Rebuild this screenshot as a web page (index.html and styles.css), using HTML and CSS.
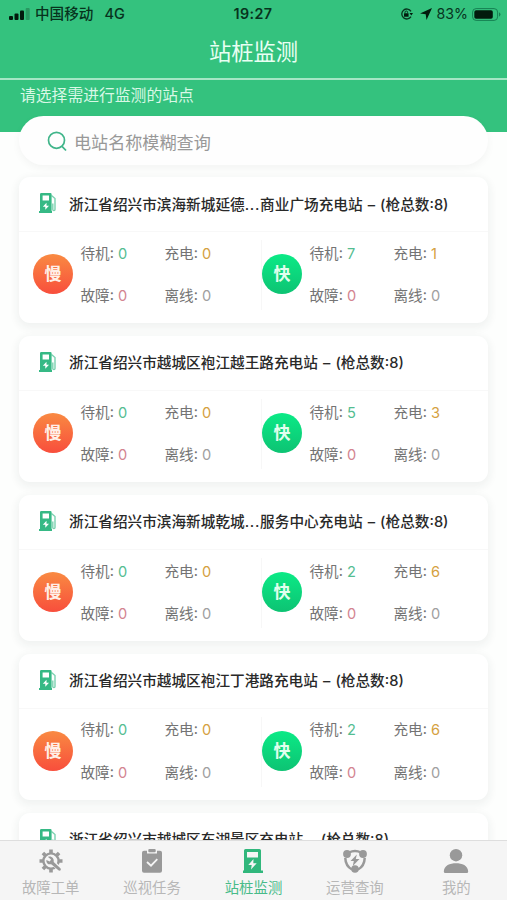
FILE: index.html
```html
<!DOCTYPE html>
<html lang="zh-CN">
<head>
<meta charset="utf-8">
<title>站桩监测</title>
<link rel="stylesheet" href="styles.css">
</head>
<body>
<svg class="defs" width="0" height="0">
  <symbol id="pump" viewBox="0 0 18 20">
    <path fill-rule="evenodd" d="M2.300 0h9a1.300 1.300 0 0 1 1.300 1.300V18H13v2H0v-2h1V1.300A1.300 1.300 0 0 1 2.300 0zM3.600 2.400v5.200h6.400v-5.200zM7.500 9.800l-3.700 4h2.500v3l3.700-4H7.500z"/>
    <path d="M12.500 2.500l3.500 3v11a1.100 1.100 0 0 1-2.200 0v-6" fill="none" stroke="currentColor" stroke-width="1.400" opacity=".65"/>
  </symbol>
</svg>
<div class="app">
  <header class="header">
    <div class="status">
      <div class="status-left">
        <svg width="21" height="12" viewBox="0 0 21 12"><rect x="0" y="8" width="4" height="4" rx="1"/><rect x="5.500" y="5.500" width="4" height="6.500" rx="1"/><rect x="11" y="2.500" width="4" height="9.500" rx="1"/><rect x="16.700" y="0" width="4" height="12" rx="1" opacity=".25"/></svg>
        <span class="carrier">中国移动</span><span class="network">4G</span>
      </div>
      <div class="time">19:27</div>
      <div class="status-right">
        <svg width="13" height="12" viewBox="0 0 13 12"><path d="M11 3.300A5 5 0 1 0 11 8.700" fill="none" stroke="#07331d" stroke-width="1.300"/><path d="M9.500 5h3.500l-1.700 2.500z"/><rect x="4" y="5.300" width="4.600" height="3.500" rx=".5"/><path d="M5 5.500V4.300a1.300 1.300 0 0 1 2.600 0v1.200" fill="none" stroke="#07331d"/></svg>
        <svg class="arrow" width="12" height="12" viewBox="0 0 12 12"><path d="M12 0L6.500 12 5.700 6.300 0 5.400z"/></svg>
        <span class="percent">83%</span>
        <svg width="29" height="13" viewBox="0 0 29 13"><rect x=".6" y=".6" width="25" height="11.800" rx="3.500" fill="none" stroke="#168052"/><rect x="2.300" y="2.300" width="18.500" height="8.400" rx="1.800"/><path d="M27 4.300q3 2.200 0 4.400z" fill="#168052"/></svg>
      </div>
    </div>
    <h1 class="title">站桩监测</h1>
    <p class="hint">请选择需进行监测的站点</p>
  </header>

  <main class="main">
    <div class="search">
      <svg width="21" height="21" viewBox="0 0 21 21" fill="none" stroke="#40b58a" stroke-width="1.700"><circle cx="9.500" cy="9.300" r="8"/><path d="M15 15.300l4 4.200"/></svg>
      <span>电站名称模糊查询</span>
    </div>

    <section class="card">
      <h2 class="station"><svg class="pump"><use href="#pump"/></svg><span>浙江省绍兴市滨海新城延德<i class="dots">...</i>商业广场充电站 – (枪总数:8)</span></h2>
      <div class="groups">
        <div class="group"><b class="badge slow">慢</b><div class="stats"><span>待机: <em class="idle">0</em></span><span>充电: <em class="charge">0</em></span><span>故障: <em class="fault">0</em></span><span>离线: <em class="offline">0</em></span></div></div>
        <div class="group"><b class="badge fast">快</b><div class="stats"><span>待机: <em class="idle">7</em></span><span>充电: <em class="charge">1</em></span><span>故障: <em class="fault">0</em></span><span>离线: <em class="offline">0</em></span></div></div>
      </div>
    </section>

    <section class="card">
      <h2 class="station"><svg class="pump"><use href="#pump"/></svg><span>浙江省绍兴市越城区袍江越王路充电站 – (枪总数:8)</span></h2>
      <div class="groups">
        <div class="group"><b class="badge slow">慢</b><div class="stats"><span>待机: <em class="idle">0</em></span><span>充电: <em class="charge">0</em></span><span>故障: <em class="fault">0</em></span><span>离线: <em class="offline">0</em></span></div></div>
        <div class="group"><b class="badge fast">快</b><div class="stats"><span>待机: <em class="idle">5</em></span><span>充电: <em class="charge">3</em></span><span>故障: <em class="fault">0</em></span><span>离线: <em class="offline">0</em></span></div></div>
      </div>
    </section>

    <section class="card">
      <h2 class="station"><svg class="pump"><use href="#pump"/></svg><span>浙江省绍兴市滨海新城乾城<i class="dots">...</i>服务中心充电站 – (枪总数:8)</span></h2>
      <div class="groups">
        <div class="group"><b class="badge slow">慢</b><div class="stats"><span>待机: <em class="idle">0</em></span><span>充电: <em class="charge">0</em></span><span>故障: <em class="fault">0</em></span><span>离线: <em class="offline">0</em></span></div></div>
        <div class="group"><b class="badge fast">快</b><div class="stats"><span>待机: <em class="idle">2</em></span><span>充电: <em class="charge">6</em></span><span>故障: <em class="fault">0</em></span><span>离线: <em class="offline">0</em></span></div></div>
      </div>
    </section>

    <section class="card">
      <h2 class="station"><svg class="pump"><use href="#pump"/></svg><span>浙江省绍兴市越城区袍江丁港路充电站 – (枪总数:8)</span></h2>
      <div class="groups">
        <div class="group"><b class="badge slow">慢</b><div class="stats"><span>待机: <em class="idle">0</em></span><span>充电: <em class="charge">0</em></span><span>故障: <em class="fault">0</em></span><span>离线: <em class="offline">0</em></span></div></div>
        <div class="group"><b class="badge fast">快</b><div class="stats"><span>待机: <em class="idle">2</em></span><span>充电: <em class="charge">6</em></span><span>故障: <em class="fault">0</em></span><span>离线: <em class="offline">0</em></span></div></div>
      </div>
    </section>

    <section class="card">
      <h2 class="station"><svg class="pump"><use href="#pump"/></svg><span>浙江省绍兴市越城区东湖景区充电站 – (枪总数:8)</span></h2>
    </section>
  </main>

  <nav class="tabs">
    <a class="tab">
      <svg viewBox="0 0 24 24"><circle cx="12" cy="12" r="7.600" fill="none" stroke="currentColor" stroke-width="2.400"/><path d="M12 .5V5M12 19v4.500M.5 12H5M19 12h4.500M3.900 3.900l3 3M3.900 20.100l3-3M20.100 3.900l-3 3" stroke="currentColor" stroke-width="3.600" fill="none"/><path d="M13.500 13.500l8.800 8" stroke="#f5f5f5" stroke-width="5"/><path d="M9 7.900l3 2.700-1.200 1.800-3.500-1.500c-.3 3 2 5.100 4.900 4.300l7.500 6.300c1.700.7 2.800-1 1.700-2.300l-6.700-6.300c.7-3.300-2.300-6.200-5.700-5z"/></svg>
      <span>故障工单</span>
    </a>
    <a class="tab">
      <svg viewBox="0 0 24 24"><path d="M4 1.800h3v2.700h10V1.800h3a2 2 0 0 1 2 2v18a2 2 0 0 1-2 2H4a2 2 0 0 1-2-2v-18a2 2 0 0 1 2-2z"/><rect x="8.300" y="0" width="7.400" height="3.300" rx="1"/><path d="M7 13l4 3.700 6.300-6.500" fill="none" stroke="#f5f5f5" stroke-width="1.800"/></svg>
      <span>巡视任务</span>
    </a>
    <a class="tab active">
      <svg viewBox="0 0 24 24"><path fill-rule="evenodd" d="M4.500 0h14a1.500 1.500 0 0 1 1.500 1.500V21.500h2V24H2v-2.500h1V1.500A1.500 1.500 0 0 1 4.500 0zM6 3v5.500h11V3zM12.500 10l-5.200 6h3.400l-.7 4.500 5.700-6.200h-3.400z"/></svg>
      <span>站桩监测</span>
    </a>
    <a class="tab">
      <svg viewBox="0 0 24 24"><path d="M6 3.500Q12 .5 18 3.500M2.300 9Q2.500 17 9 20.500M21.700 9Q21.500 17 15 20.500" fill="none" stroke="currentColor" stroke-width="2.500"/><circle cx="4" cy="5" r="3.900"/><circle cx="20" cy="5" r="3.900"/><circle cx="12" cy="20" r="3.800"/><path d="M13.800 5.500L7.500 12h3.300l-1 5 6.700-7h-3.700z"/></svg>
      <span>运营查询</span>
    </a>
    <a class="tab">
      <svg viewBox="0 0 24 24"><circle cx="12" cy="6.200" r="6.200"/><path d="M-.2 22.500C0 16.500 6 14.300 12 14.300s12 2.200 12.200 8.200q0 1.500-1.500 1.500h-21.400q-1.500 0-1.500-1.500z"/></svg>
      <span>我的</span>
    </a>
  </nav>
</div>
</body>
</html>
```
FILE: styles.css
```css
* { box-sizing: border-box; }

body {
  margin: 0;
  font-family: Inter, "Noto Sans CJK SC", sans-serif;
  background: #fdfefd;
}

.defs { display: block; }

.app {
  display: flex;
  flex-direction: column;
  height: 900px;
  overflow: hidden;
}

.header {
  flex: none;
  height: 132px;
  background: #34c27e;
}

.status {
  display: grid;
  grid-template-columns: 1fr auto 1fr;
  align-items: center;
  height: 28px;
  padding: 0 6px 0 9px;
  color: #07331d;
  font-size: 14px;
  line-height: 20px;
}

.status svg { fill: #021a0d; flex: none; }
.status-left, .status-right { display: flex; align-items: center; }
.status-right { justify-content: flex-end; }
.carrier { margin-left: 5px; font-size: 14.600px; font-weight: 500; }
.network { margin-left: 11px; font-size: 14.500px; font-weight: 500; }
.time { margin-right: 4px; font-size: 14.300px; font-weight: 600; letter-spacing: .4px; }
.arrow { margin: 0 5px 0 7px; }
.percent { margin-right: 4px; font-size: 14.200px; }

.title {
  height: 52px;
  margin: 0;
  border-bottom: 2px solid #a5e6c5;
  color: #e9fff3;
  font-size: 22.300px;
  font-weight: 400;
  line-height: 47px;
  text-align: center;
}

.hint {
  margin: 0;
  padding-left: 20px;
  color: #d9f8e6;
  font-size: 15.800px;
  line-height: 31px;
}

.main {
  flex: 1;
  min-height: 0;
  padding: 0 19px;
  overflow: hidden;
  margin-top: -17px;
}

.search {
  display: flex;
  align-items: center;
  gap: 6px;
  height: 49px;
  margin: 1px 0 12px;
  padding: 1px 0 0 28px;
  border-radius: 25px;
  background: #fefefe;
  box-shadow: 0 3px 8px rgba(0, 0, 0, .045);
  color: #989898;
  font-size: 17.100px;
}

.search svg { margin-top: 1px; }

.card {
  height: 146px;
  margin-bottom: 12.900px;
  border-radius: 11px;
  background: #fff;
  box-shadow: 0 3px 9px 2px rgba(40, 55, 45, .06);
}

.station {
  display: flex;
  align-items: center;
  height: 54px;
  margin: 0;
  padding: 0 0 2px 20px;
  color: #292929;
  font-size: 14.650px;
  font-weight: 500;
  white-space: nowrap;
  word-spacing: 1.200px;
}

.pump {
  width: 18px;
  height: 20px;
  margin-right: 12px;
  color: #36b985;
  fill: #36b985;
}

.dots { font-style: normal; letter-spacing: .7px; }

.groups {
  display: grid;
  grid-template-columns: 229px 1fr;
  height: 87px;
  padding-left: 14px;
  border-top: 1px solid #f8f8f8;
}

.group { display: flex; align-items: flex-start; }
.group + .group { box-shadow: -9px 0 0 -8px #f7f7f7; }

.badge {
  display: grid;
  place-items: center;
  flex: none;
  width: 40px;
  height: 40px;
  margin-top: 22px;
  border-radius: 50%;
  color: #fff0e8;
  font-size: 17px;
  font-weight: 700;
  line-height: 20px;
}

.slow { background: linear-gradient(#f98a42, #f84e3c); }
.fast { background: linear-gradient(#0bea86, #0dc373); color: #e2ffef; }

.stats {
  display: grid;
  grid-template: 42.500px 42.500px / 84px 84px;
  align-items: center;
  margin: -1px 0 0 7.500px;
  color: #747474;
  font-size: 14.600px;
  white-space: nowrap;
}

.stats em { font-style: normal; }
.idle { color: #54bd91; }
.charge { color: #d5a13f; }
.fault { color: #d38490; }
.offline { color: #a0a0a0; }

.tabs {
  display: grid;
  grid-template-columns: repeat(5, 1fr);
  flex: none;
  height: 60px;
  border-top: 1px solid #dedede;
  background: #f5f5f5;
}

.tab {
  display: flex;
  flex-direction: column;
  align-items: center;
  padding-top: 8px;
  color: #b7b7b7;
  font-size: 14.400px;
  line-height: 22px;
}

.tab svg {
  width: 24px;
  height: 24px;
  margin-bottom: 4px;
  color: #999;
  fill: #999;
  overflow: visible;
}

.tab.active { color: #48bb89; }
.tab.active svg { color: #31b77c; fill: #31b77c; }
```
